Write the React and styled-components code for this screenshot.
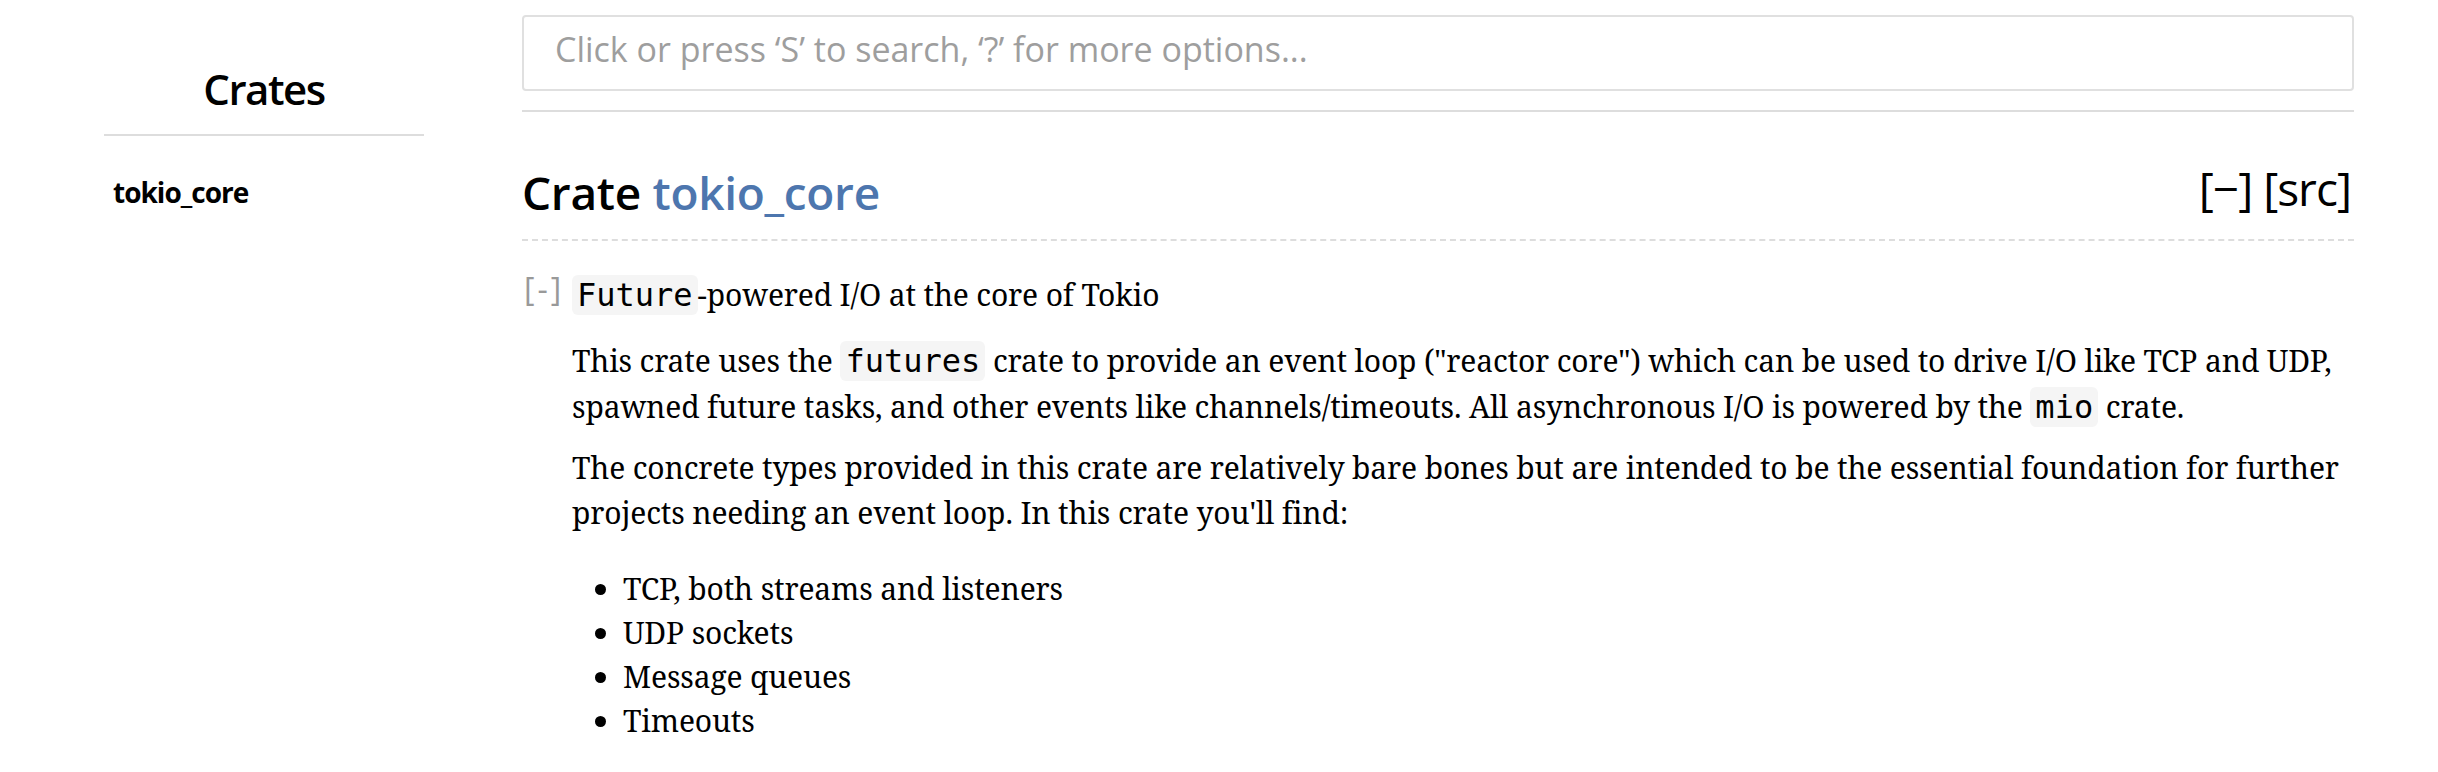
import React from 'react';
import styled, { createGlobalStyle } from 'styled-components';

const Global = createGlobalStyle`
  html, body { margin: 0; padding: 0; background: #fff; }
  body {
    color: #000;
    font-family: "Noto Serif", "DejaVu Serif Condensed", "Liberation Serif", serif;
  }
  * { box-sizing: border-box; }
`;

const SANS = `"Open Sans", "Noto Sans", "Liberation Sans", sans-serif`;
const MONO = `"DejaVu Sans Mono", "Liberation Mono", monospace`;

const Page = styled.div`
  display: flex;
  width: 2438px;
  min-height: 772px;
`;

const Sidebar = styled.nav`
  flex: 0 0 522px;
  padding-left: 104px;
`;

const Block = styled.div`
  width: 320px;
`;

const BlockTitle = styled.h3`
  margin: 59px 0 0;
  padding-bottom: 15px;
  border-bottom: 2px solid #ddd;
  text-align: center;
  font-family: ${SANS};
  font-weight: 600;
  font-size: 42px;
  line-height: 60px;
  letter-spacing: -1.5px;
`;

const CrateList = styled.ul`
  list-style: none;
  margin: 36px 0 0;
  padding: 0 0 0 9px;
`;

const CrateLink = styled.a`
  display: block;
  font-family: ${SANS};
  font-weight: 700;
  font-size: 28px;
  line-height: 40px;
  letter-spacing: -1px;
  color: #000;
  text-decoration: none;
`;

const Main = styled.main`
  flex: 1;
  min-width: 0;
  padding-right: 84px;
`;

const SubNav = styled.div`
  padding: 15px 0 19px;
  border-bottom: 2px solid #ddd;
`;

const SearchInput = styled.input`
  display: block;
  width: 100%;
  height: 76px;
  margin: 0;
  padding: 0 20px 8px 31px;
  border: 2px solid #e0e0e0;
  border-radius: 4px;
  outline: none;
  background: #fff;
  font-family: ${SANS};
  font-size: 34px;
  color: #000;
  &::placeholder {
    color: #9e9e9e;
    opacity: 1;
  }
`;

const TitleRow = styled.h1`
  display: flex;
  justify-content: space-between;
  align-items: flex-start;
  margin: 49.5px 0 0;
  padding-bottom: 17.5px;
  border-bottom: 2px dashed #ddd;
  font-weight: normal;
`;

const Fqn = styled.span`
  font-family: ${SANS};
  font-weight: 600;
  font-size: 46px;
  line-height: 60px;
  letter-spacing: -0.3px;
`;

const CrateName = styled.a`
  color: #4d76ae;
  text-decoration: none;
`;

const OutOfBand = styled.span`
  font-family: ${SANS};
  font-weight: 400;
  font-size: 46px;
  line-height: 53px;
  letter-spacing: -1px;
  margin-right: 3px;
`;

const DocRow = styled.div`
  display: flex;
  margin-top: 31px;
`;

const Toggle = styled.a`
  flex: 0 0 50px;
  padding-left: 2px;
  font-family: ${SANS};
  font-weight: 400;
  font-size: 32px;
  line-height: 33px;
  letter-spacing: 3px;
  color: #999;
  text-decoration: none;
`;

const Docblock = styled.div`
  flex: 1;
  min-width: 0;
  font-size: 30px;
  line-height: 45px;
  letter-spacing: -0.15px;
`;

const Summary = styled.p`
  margin: 0 0 20px;
`;

const Para = styled.p`
  margin: 0 0 15px;
`;

const Code = styled.code`
  font-family: ${MONO};
  font-size: 32px;
  letter-spacing: 0;
  padding: 1px 5px;
  border-radius: 6px;
  background: #f5f5f5;
`;

const List = styled.ul`
  margin: 32px 0 0;
  padding-left: 51px;
  list-style: disc;
`;

const Item = styled.li`
  line-height: 44px;
`;

export default function App() {
  return (
    <>
      <Global />
      <Page>
        <Sidebar>
          <Block>
            <BlockTitle>Crates</BlockTitle>
            <CrateList>
              <li>
                <CrateLink href="#">tokio_core</CrateLink>
              </li>
            </CrateList>
          </Block>
        </Sidebar>
        <Main>
          <SubNav>
            <SearchInput
              type="text"
              placeholder={'Click or press \u2018S\u2019 to search, \u2018?\u2019 for more options...'}
              aria-label="Search"
            />
          </SubNav>
          <TitleRow>
            <Fqn>
              Crate <CrateName href="#">tokio_core</CrateName>
            </Fqn>
            <OutOfBand>[&minus;] [src]</OutOfBand>
          </TitleRow>
          <DocRow>
            <Toggle href="#">[-]</Toggle>
            <Docblock>
              <Summary>
                <Code>Future</Code>-powered I/O at the core of Tokio
              </Summary>
              <Para>
                This crate uses the <Code>futures</Code> crate to provide an event loop ("reactor core") which can be used to drive I/O like TCP and UDP, spawned future tasks, and other events like channels/timeouts. All asynchronous I/O is powered by the <Code>mio</Code> crate.
              </Para>
              <Para>
                The concrete types provided in this crate are relatively bare bones but are intended to be the essential foundation for further projects needing an event loop. In this crate you'll find:
              </Para>
              <List>
                <Item>TCP, both streams and listeners</Item>
                <Item>UDP sockets</Item>
                <Item>Message queues</Item>
                <Item>Timeouts</Item>
              </List>
            </Docblock>
          </DocRow>
        </Main>
      </Page>
    </>
  );
}
